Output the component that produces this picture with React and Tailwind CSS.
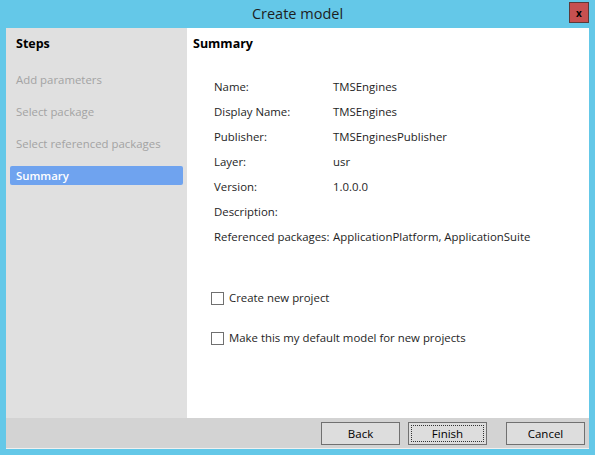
const steps = [
  { label: "Add parameters", active: false },
  { label: "Select package", active: false },
  { label: "Select referenced packages", active: false },
  { label: "Summary", active: true },
];

const summary = [
  ["Name:", "TMSEngines"],
  ["Display Name:", "TMSEngines"],
  ["Publisher:", "TMSEnginesPublisher"],
  ["Layer:", "usr"],
  ["Version:", "1.0.0.0"],
  ["Description:", ""],
  ["Referenced packages:", "ApplicationPlatform, ApplicationSuite"],
];

function Checkbox({ label }) {
  return (
    <label className="flex items-center gap-[5px] h-[16px]">
      <span className="w-[13px] h-[13px] border border-[#707070] bg-white"></span>
      <span>{label}</span>
    </label>
  );
}

function Button({ children, focused, className = "" }) {
  return (
    <button
      type="button"
      className={`w-[79px] h-[23px] border border-[#707070] bg-[#dddddd] p-[2px] text-[11.5px] text-black ${className}`}
    >
      <span
        className={`flex h-full w-full items-center justify-center ${
          focused ? "border border-dotted border-[#333]" : "border border-transparent"
        }`}
      >
        {children}
      </span>
    </button>
  );
}

export default function App() {
  return (
    <div
      className="w-[595px] h-[455px] bg-[#64c8e8] flex flex-col text-[11.4px] text-[#1e1e1e]"
      style={{ fontFamily: '"Open Sans", "Noto Sans", sans-serif' }}
    >
      {/* Title bar */}
      <div className="relative h-[28px] flex items-center justify-center">
        <span className="text-[14.5px] text-[#1e1e1e]">Create model</span>
        <div className="absolute right-[6px] top-[2px] w-[20px] h-[21px] bg-[#c75050] border border-[#5c3a3a] flex items-center justify-center">
          <span className="text-[10px] font-bold text-black leading-none">x</span>
        </div>
      </div>

      {/* Window body */}
      <div className="flex-1 mx-[6px] mb-[6px] flex flex-col bg-white">
        <div className="flex-1 flex">
          {/* Steps sidebar */}
          <div className="w-[181px] bg-[#e0e0e0] px-[4px]">
            <div className="h-[32px] flex items-center pl-[6px] text-[12.5px] font-bold text-black">
              Steps
            </div>
            <div className="mt-[10px] flex flex-col gap-[13px]">
              {steps.map((step) => (
                <div
                  key={step.label}
                  className={`h-[19px] flex items-center pl-[6px] rounded-[2px] whitespace-nowrap ${
                    step.active
                      ? "bg-[#6fa3ef] text-white font-semibold"
                      : "text-[#a3a3a3]"
                  }`}
                >
                  {step.label}
                </div>
              ))}
            </div>
          </div>

          {/* Summary panel */}
          <div className="flex-1 pl-[6px]">
            <div className="h-[32px] flex items-center text-[12.5px] font-bold text-black">
              Summary
            </div>
            <div className="mt-[18px] pl-[21px] flex flex-col gap-[7px]">
              {summary.map(([label, value]) => (
                <div key={label} className="flex h-[18px] items-center whitespace-nowrap">
                  <span className="w-[119px] shrink-0">{label}</span>
                  <span>{value}</span>
                </div>
              ))}
            </div>
            <div className="mt-[44px] pl-[18px] flex flex-col gap-[24px]">
              <Checkbox label="Create new project" />
              <Checkbox label="Make this my default model for new projects" />
            </div>
          </div>
        </div>

        {/* Button bar */}
        <div className="h-[31px] bg-[#d3d3d3] flex items-start justify-end pt-[4px] pr-[4px] border-b border-[#f0f0f0]">
          <Button>Back</Button>
          <Button focused className="ml-[8px]">
            Finish
          </Button>
          <Button className="ml-[19px]">Cancel</Button>
        </div>
      </div>
    </div>
  );
}
